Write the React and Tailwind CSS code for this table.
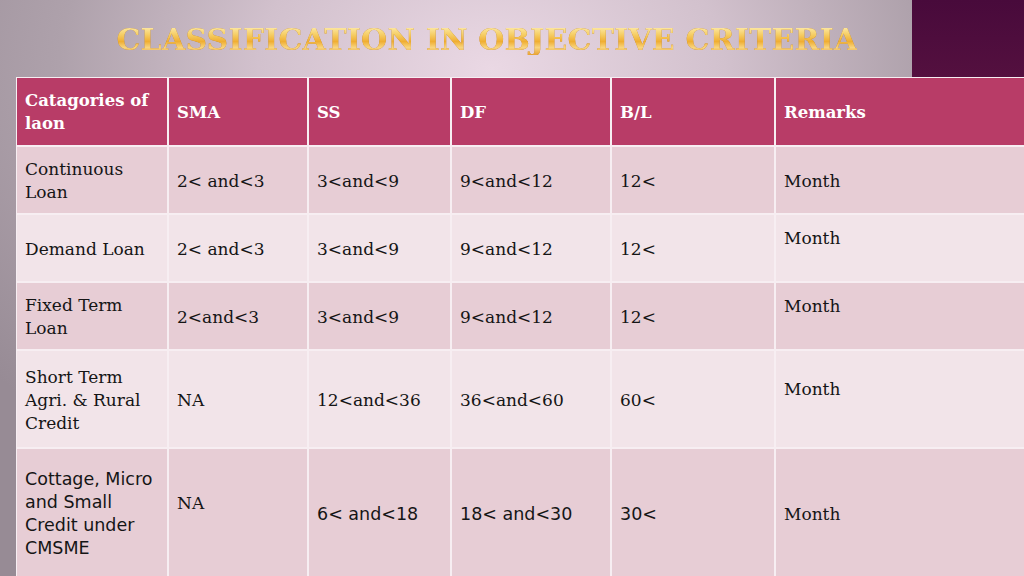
import React from 'react'

const serif = 'font-[DejaVu_Serif,serif]'
const sans = 'font-[DejaVu_Sans,sans-serif]'

const header = ['Catagories of laon', 'SMA', 'SS', 'DF', 'B/L', 'Remarks']

// each cell: [text, font, lifted]
const rows = [
  {
    h: 'h-[66px]',
    bg: 'bg-[#e7cdd5]',
    cells: [
      ['Continuous\nLoan', serif],
      ['2< and<3', serif],
      ['3<and<9', serif],
      ['9<and<12', serif],
      ['12<', serif],
      ['Month', serif],
    ],
  },
  {
    h: 'h-[66px]',
    bg: 'bg-[#f2e4e9]',
    cells: [
      ['Demand Loan', serif],
      ['2< and<3', serif],
      ['3<and<9', serif],
      ['9<and<12', serif],
      ['12<', serif],
      ['Month', serif, true],
    ],
  },
  {
    h: 'h-[66px]',
    bg: 'bg-[#e7cdd5]',
    cells: [
      ['Fixed Term\nLoan', serif],
      ['2<and<3', serif],
      ['3<and<9', serif],
      ['9<and<12', serif],
      ['12<', serif],
      ['Month', serif, true],
    ],
  },
  {
    h: 'h-[96px]',
    bg: 'bg-[#f2e4e9]',
    cells: [
      ['Short Term\nAgri. & Rural\nCredit', serif],
      ['NA', serif],
      ['12<and<36', serif],
      ['36<and<60', serif],
      ['60<', serif],
      ['Month', serif, true],
    ],
  },
  {
    h: 'h-[128px]',
    bg: 'bg-[#e7cdd5]',
    cells: [
      ['Cottage, Micro\nand Small\nCredit under\nCMSME', sans],
      ['NA', serif, true],
      ['6< and<18', sans],
      ['18< and<30', sans],
      ['30<', sans],
      ['Month', serif],
    ],
  },
]

const cols = 'grid grid-cols-[150px_138px_141px_158px_162px_249px] gap-[2px]'

export default function App() {
  return (
    <div className="w-[1024px] h-[576px] overflow-hidden bg-[radial-gradient(ellipse_65%_80%_at_48%_12%,#ead8e4_0%,#d2c1cd_35%,#aea1ab_65%,#978b95_100%)]">
      <div className="flex h-[77px]">
        <div className="flex-1 flex items-center justify-center pl-[62px] pt-[3px]">
          <h1
            className={`${serif} font-bold text-[30px] tracking-[0.2px] leading-none bg-[linear-gradient(180deg,#fff0b8_0%,#f6d06a_30%,#f0ae32_55%,#f8d47e_75%,#e9a232_100%)] bg-clip-text text-transparent [filter:drop-shadow(0_0_0.7px_#b87a1f)]`}
          >
            CLASSIFICATION IN OBJECTIVE CRITERIA
          </h1>
        </div>
        <div className="w-[112px] bg-[linear-gradient(180deg,#480a3b,#54103f)]" />
      </div>

      <div className={`ml-[16px] ${cols} bg-[#f7eef2] p-[1px]`}>
        {header.map((t, i) => (
          <div
            key={i}
            className={`${serif} h-[67px] bg-[#b83c67] text-white font-bold text-[16.5px] leading-[23px] px-[8px] pt-[1px] flex items-center`}
          >
            {i === 0 ? (
              <span>
                Catagories of
                <br />
                laon
              </span>
            ) : (
              t
            )}
          </div>
        ))}
        {rows.map((row, r) =>
          row.cells.map(([t, font, lifted], c) => (
            <div
              key={`${r}-${c}`}
              className={`${row.h} ${row.bg} ${font} text-[#151515] ${font === sans ? 'text-[17.5px]' : 'text-[17px]'} leading-[23px] px-[8px] pt-[2px] flex items-center whitespace-pre-line`}
            >
              <span className={lifted ? 'pb-[21px]' : ''}>{t}</span>
            </div>
          ))
        )}
      </div>
    </div>
  )
}
